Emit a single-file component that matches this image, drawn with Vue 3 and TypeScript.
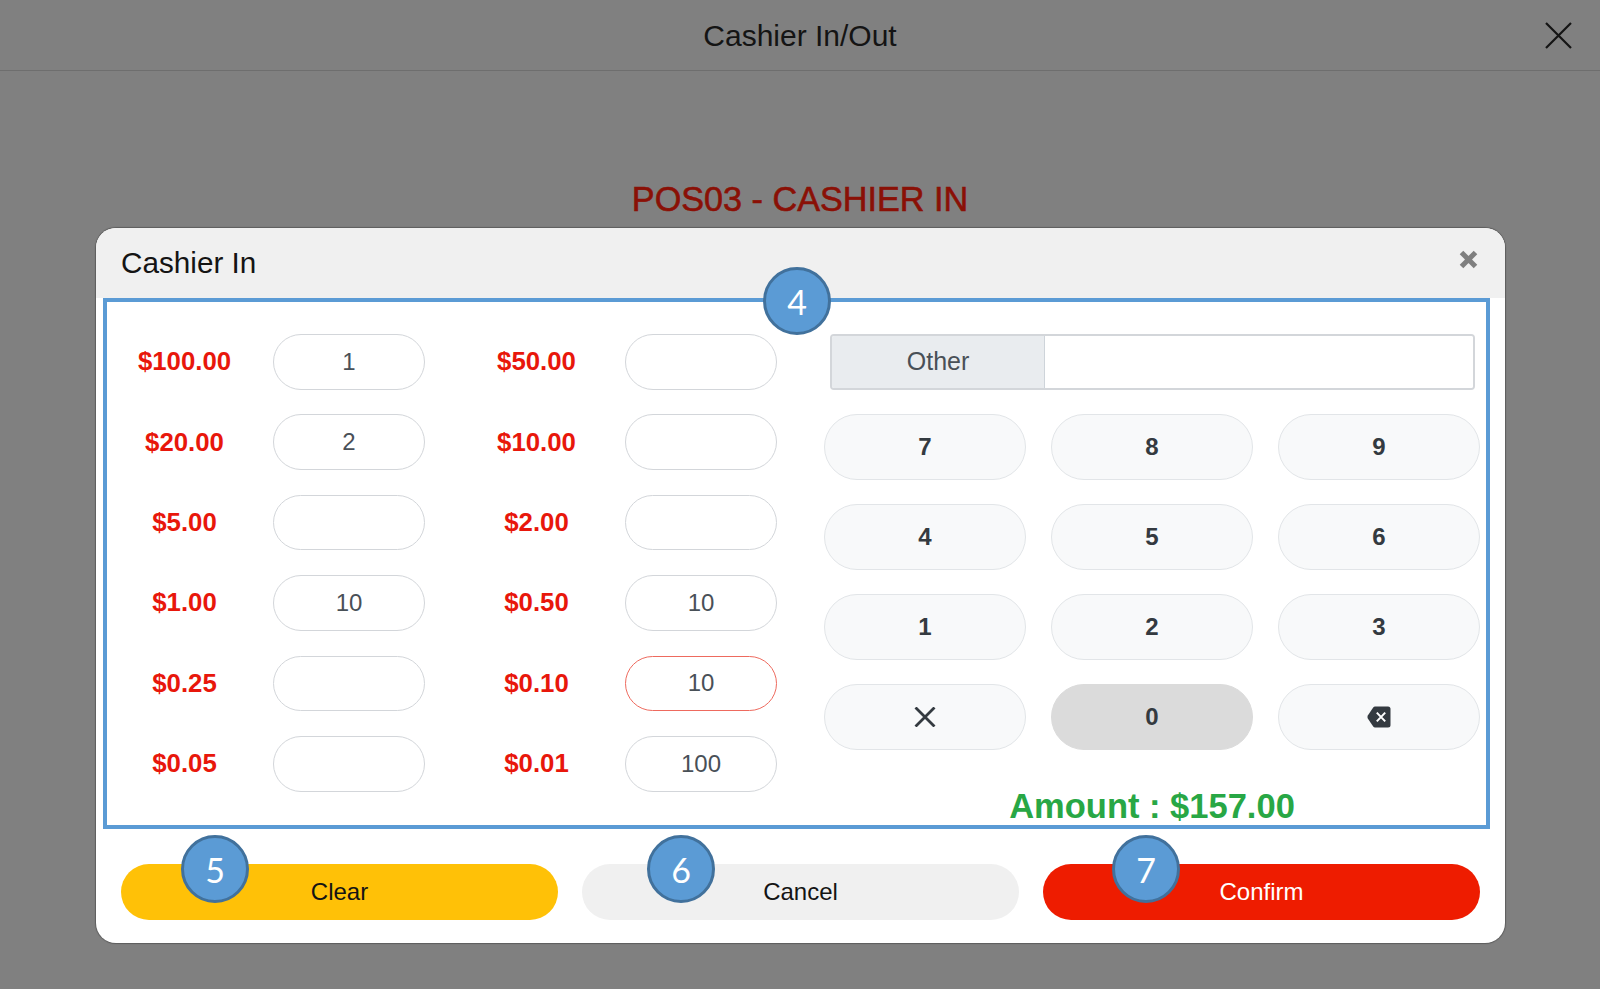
<script setup lang="ts">
interface Denom { label: string; value: string; active?: boolean }

const denoms: Denom[] = [
  { label: '$100.00', value: '1' },
  { label: '$50.00', value: '' },
  { label: '$20.00', value: '2' },
  { label: '$10.00', value: '' },
  { label: '$5.00', value: '' },
  { label: '$2.00', value: '' },
  { label: '$1.00', value: '10' },
  { label: '$0.50', value: '10' },
  { label: '$0.25', value: '' },
  { label: '$0.10', value: '10', active: true },
  { label: '$0.05', value: '' },
  { label: '$0.01', value: '100' },
]

const digits = ['7', '8', '9', '4', '5', '6', '1', '2', '3']
</script>

<template>
  <div class="page">
    <header class="topbar">
      <span class="topbar-title">Cashier In/Out</span>
      <svg class="topbar-close" viewBox="0 0 27 27" width="27" height="27" aria-label="Close">
        <path d="M1 1 L26 26 M26 1 L1 26" fill="none" stroke="#141414" stroke-width="2.2" />
      </svg>
    </header>

    <h1 class="station">POS03 - CASHIER IN</h1>

    <section class="modal">
      <div class="modal-head">
        <span class="modal-title">Cashier In</span>
        <svg class="modal-close" viewBox="0 0 19 19" width="19" height="19" aria-label="Close">
          <path d="M2.5 2.5 L16.5 16.5 M16.5 2.5 L2.5 16.5" fill="none" stroke="#7f7f7f" stroke-width="5" />
        </svg>
      </div>

      <div class="panel">
        <span class="callout callout-four">4</span>

        <div class="denoms">
          <div v-for="d in denoms" :key="d.label" class="denom">
            <span class="denom-label">{{ d.label }}</span>
            <div class="qty" :class="{ 'qty-active': d.active }">{{ d.value }}</div>
          </div>
        </div>

        <div class="entry">
          <div class="other">
            <span class="other-label">Other</span>
            <div class="other-field"></div>
          </div>

          <div class="keypad">
            <button v-for="n in digits" :key="n" class="key">{{ n }}</button>
            <button class="key" aria-label="Clear entry">
              <svg viewBox="0 0 22 20" width="22" height="20">
                <path d="M1.5 0.5 L20.5 19.5 M20.5 0.5 L1.5 19.5" fill="none" stroke="#343a40" stroke-width="2.8" />
              </svg>
            </button>
            <button class="key key-pressed">0</button>
            <button class="key" aria-label="Backspace">
              <svg viewBox="0 0 24 22" width="24" height="22">
                <path d="M8 0.5 H21 Q23.5 0.5 23.5 3 V19 Q23.5 21.5 21 21.5 H8 Q7 21.5 6.2 20.6 L0.8 12.4 Q0 11 0.8 9.6 L6.2 1.4 Q7 0.5 8 0.5 Z" fill="#343a40" />
                <path d="M9.8 6.6 L18.2 15.4 M18.2 6.6 L9.8 15.4" fill="none" stroke="#ffffff" stroke-width="2" />
              </svg>
            </button>
          </div>

          <div class="amount">Amount : $157.00</div>
        </div>
      </div>

      <div class="actions">
        <button class="action action-clear">Clear<span class="callout callout-action callout-five">5</span></button>
        <button class="action action-cancel">Cancel<span class="callout callout-action callout-six">6</span></button>
        <button class="action action-confirm">Confirm<span class="callout callout-action callout-seven">7</span></button>
      </div>
    </section>
  </div>
</template>

<style>
html, body { margin: 0; overflow: hidden; background: #808080; }
</style>

<style scoped>
.page {
  height: 989px;
  background: #808080;
  font-family: "Liberation Sans", Arial, sans-serif;
  color: #141414;
  display: flex;
  flex-direction: column;
}
.topbar {
  position: relative;
  height: 71px;
  box-sizing: border-box;
  border-bottom: 1px solid #6e6e6e;
  display: flex;
  align-items: center;
  justify-content: center;
  flex-shrink: 0;
}
.topbar-title { font-size: 30px; margin-top: 1px; }
.topbar-close { position: absolute; left: 1545px; top: 22px; }
.station {
  margin: 109px 0 0;
  height: 48px;
  line-height: 38px;
  text-align: center;
  font-size: 34.2px;
  font-weight: 400;
  color: #8a1006;
  -webkit-text-stroke: 0.6px #8a1006;
}
.modal {
  width: 1409px;
  height: 715px;
  margin-left: 96px;
  box-sizing: border-box;
  background: #fff;
  border-radius: 20px;
  box-shadow: 0 0 1px 1px rgba(40, 40, 40, 0.4);
  overflow: hidden;
  display: flex;
  flex-direction: column;
}
.modal-head {
  height: 70px;
  flex-shrink: 0;
  background: #f0f0f0;
  padding: 0 27px 0 25px;
  display: flex;
  align-items: center;
  justify-content: space-between;
}
.modal-title { font-size: 29.7px; margin-top: -1px; }
.modal-close { margin-top: -7px; }
.panel {
  position: relative;
  margin: 0 15px 0 7px;
  height: 531px;
  box-sizing: border-box;
  border: 4.5px solid #5b9bd5;
  display: flex;
  align-items: flex-start;
  padding: 32px 0 0 2px;
}
.denoms {
  width: 715px;
  display: grid;
  grid-template-columns: 316px 316px;
  column-gap: 36px;
  row-gap: 24.8px;
  flex-shrink: 0;
}
.denom { display: flex; align-items: center; gap: 13px; }
.denom-label {
  width: 151px;
  text-align: center;
  font-size: 25.8px;
  font-weight: 700;
  color: #e8170b;
}
.qty {
  width: 152px;
  height: 55.6px;
  box-sizing: border-box;
  border: 1.6px solid #d3d6da;
  border-radius: 28px;
  display: flex;
  align-items: center;
  justify-content: center;
  font-size: 24px;
  color: #495057;
}
.qty-active { border-color: #ee6a5e; }
.entry { width: 656px; flex-shrink: 0; }
.other {
  margin: 0 5.5px 0 6px;
  height: 55.6px;
  box-sizing: border-box;
  border: 2px solid #d3d6da;
  border-radius: 4px;
  display: flex;
  overflow: hidden;
}
.other-label {
  width: 212px;
  background: #e9ecef;
  border-right: 1px solid #ced4da;
  display: flex;
  align-items: center;
  justify-content: center;
  font-size: 25px;
  color: #495057;
}
.other-field { flex: 1; background: #fff; }
.keypad {
  margin-top: 24px;
  display: grid;
  grid-template-columns: repeat(3, 202px);
  grid-auto-rows: 66px;
  column-gap: 25px;
  row-gap: 24px;
}
.key {
  padding: 0;
  font: 700 24px "Liberation Sans", Arial, sans-serif;
  color: #343a40;
  background: #f8f9fa;
  border: 1.6px solid #e2e5e8;
  border-radius: 33px;
  display: flex;
  align-items: center;
  justify-content: center;
}
.key-pressed { background: #dbdbdb; border-color: #dbdbdb; }
.amount {
  margin-top: 36px;
  text-align: center;
  font-size: 34.5px;
  line-height: 40px;
  font-weight: 700;
  color: #28a745;
}
.actions {
  padding: 35px 25px 0;
  display: grid;
  grid-template-columns: repeat(3, 1fr);
  column-gap: 24px;
}
.action {
  position: relative;
  height: 56px;
  padding: 0;
  border: none;
  border-radius: 28px;
  font: 400 24px "Liberation Sans", Arial, sans-serif;
  color: #141414;
}
.action-clear { background: #ffc107; }
.action-cancel { background: #f0f0f0; }
.action-confirm { background: #ee1c00; color: #fff; }
.callout {
  position: absolute;
  width: 68px;
  height: 68px;
  box-sizing: border-box;
  border-radius: 50%;
  background: #5b9bd5;
  border: 3.5px solid #41719c;
  color: #fff;
  display: flex;
  align-items: center;
  justify-content: center;
  font: 400 34px Lato, "Open Sans", sans-serif;
}
.callout-four { left: 656px; top: -35px; }
.callout-action { top: -29px; }
.callout-five { left: 60px; }
.callout-six { left: 65px; }
.callout-seven { left: 69px; }
</style>
